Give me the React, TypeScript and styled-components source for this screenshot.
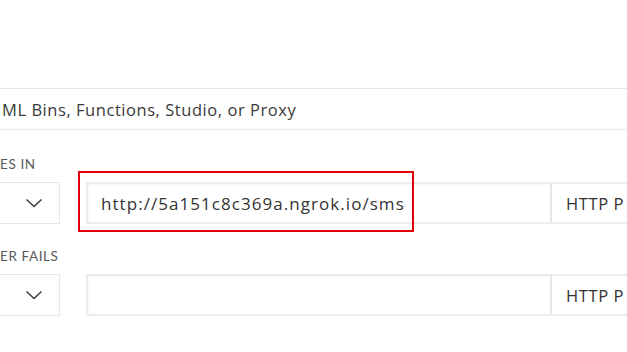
import styled, { createGlobalStyle } from "styled-components";

const GlobalStyle = createGlobalStyle`
    html, body {
        margin: 0;
        padding: 0;
        background: #ffffff;
    }
    body {
        font-family: "Open Sans", Lato, "Liberation Sans", sans-serif;
        color: #333333;
    }
`;

const Page = styled.div`
    width: 627px;
    height: 352px;
    overflow: hidden;
    padding-top: 88px;
    box-sizing: border-box;
`;

/* the handler select that runs off both sides of the view */
const WideSelect = styled.div`
    display: flex;
    align-items: center;
    height: 42px;
    margin: 0 -20px;
    padding-left: 21px;
    border: 1px solid #e9e9e9;
    box-sizing: border-box;
    font-size: 16.5px;
    letter-spacing: 0.55px;
    color: #3a3a3a;
    white-space: nowrap;
`;

const Section = styled.div<{ top: number }>`
    margin-top: ${(props) => props.top}px;
`;

const Label = styled.div`
    font-family: Lato, "Open Sans", sans-serif;
    font-size: 13.5px;
    line-height: 16px;
    height: 16px;
    letter-spacing: 0.6px;
    text-transform: uppercase;
    color: #5a5a5a;
    margin-bottom: 10px;
`;

const Row = styled.div`
    display: flex;
    align-items: stretch;
    height: 42px;
    margin-left: -40px;
`;

const Dropdown = styled.div`
    width: 100px;
    flex-shrink: 0;
    display: flex;
    align-items: center;
    justify-content: flex-end;
    padding-right: 16px;
    border: 1px solid #e6e6e6;
    box-sizing: border-box;
    background: #ffffff;
`;

const UrlWrap = styled.div`
    position: relative;
    margin-left: 26px;
    width: 465px;
    flex-shrink: 0;
`;

const UrlInput = styled.div`
    height: 100%;
    display: flex;
    align-items: center;
    padding-left: 13px;
    border: 2px solid #ececec;
    border-right: 1px solid #e6e6e6;
    box-sizing: border-box;
    box-shadow: inset 1px 1px 2px rgba(0, 0, 0, 0.04);
    font-size: 17px;
    letter-spacing: 1.05px;
    color: #333333;
    white-space: nowrap;
`;

/* red annotation box drawn over the url field */
const Highlight = styled.div`
    position: absolute;
    left: -8px;
    top: -11px;
    width: 336px;
    height: 61px;
    border: 2px solid #e3000b;
    box-sizing: border-box;
    pointer-events: none;
`;

const MethodSelect = styled.div`
    width: 140px;
    flex-shrink: 0;
    display: flex;
    align-items: center;
    padding-left: 14px;
    border: 2px solid #ececec;
    border-left: 1px solid #e6e6e6;
    box-sizing: border-box;
    font-size: 16.5px;
    letter-spacing: 0.6px;
    color: #333333;
    white-space: nowrap;
`;

function Chevron() {
    return (
        <svg width="18" height="10" viewBox="0 0 18 10">
            <path d="M1.5 1.5 L9 8.5 L16.5 1.5" fill="none" stroke="#3a3a3a" strokeWidth="1.5" />
        </svg>
    );
}

function HandlerRow({ url, highlighted }: { url: string; highlighted?: boolean }) {
    return (
        <Row>
            <Dropdown>
                <Chevron />
            </Dropdown>
            <UrlWrap>
                <UrlInput>{url}</UrlInput>
                {highlighted && <Highlight />}
            </UrlWrap>
            <MethodSelect>HTTP P</MethodSelect>
        </Row>
    );
}

function App() {
    return (
        <Page>
            <GlobalStyle />
            <WideSelect>ML Bins, Functions, Studio, or Proxy</WideSelect>
            <Section top={26}>
                <Label>ES IN</Label>
                <HandlerRow url="http://5a151c8c369a.ngrok.io/sms" highlighted />
            </Section>
            <Section top={24}>
                <Label>ER FAILS</Label>
                <HandlerRow url="" />
            </Section>
        </Page>
    );
}

export default App;
